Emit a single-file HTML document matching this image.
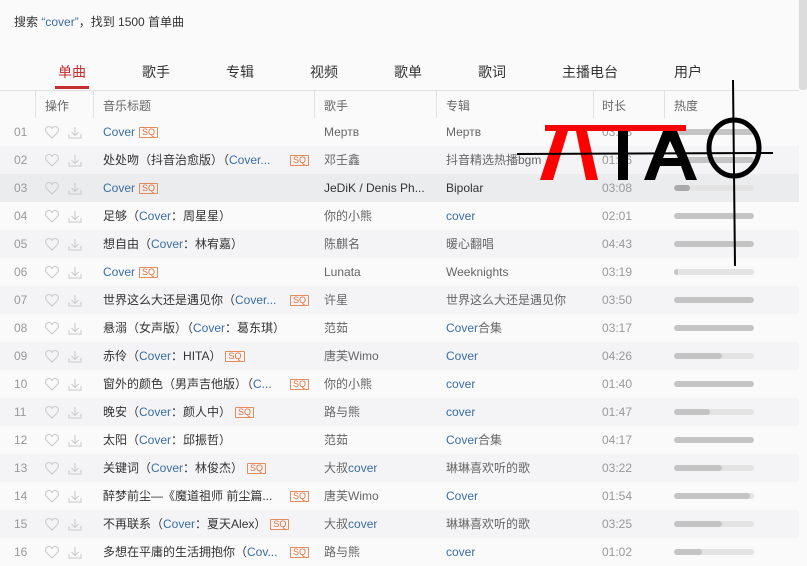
<!DOCTYPE html>
<html><head><meta charset="utf-8"><style>
*{margin:0;padding:0;box-sizing:border-box}
body{width:807px;height:554px;overflow:hidden;background:#fafafa;font-family:"Liberation Sans","Noto Sans CJK SC",sans-serif;font-size:12px;color:#333;position:relative}
.a{position:absolute;white-space:nowrap}
.b,.r .b{color:#3a6ea5}
.hd{position:absolute;left:0;top:90px;width:799px;height:29px;border-top:1px solid #e1e1e2;border-bottom:1px solid #e1e1e2;background:#fafafa;color:#666}
.hd span{position:absolute;top:6px}
.hd i{position:absolute;top:0;width:1px;height:27px;background:#e1e1e2}
.r{position:absolute;left:0;width:799px;height:28px;line-height:28px}
.r span{position:absolute;white-space:nowrap}
.n{left:14px;color:#999}
.t{left:103px}
.s{left:324px;color:#666}
.al{left:446px;color:#666}
.d{left:602px;color:#999}
.sq{display:inline-block;border:1px solid #e58a5a;color:#e0703a;font-size:9px;line-height:9px;height:11px;padding:0 2px;border-radius:1px;vertical-align:1px;margin-left:4px;font-style:normal}
.bar{position:absolute;left:674px;top:11px;width:80px;height:6px;border-radius:3px;background:#e3e3e3;overflow:hidden}
.bar b{display:block;height:6px;background:#c4c4c4;border-radius:3px}
.ic{position:absolute;left:45px;top:7px}
</style></head><body>
<div class="a" style="left:14px;top:13px;color:#333">搜索 <span class="b">“cover”</span>，找到 1500 首单曲</div>
<div class="a" style="top:62px;left:58px;font-size:14px;color:#c62f2f">单曲</div>
<div class="a" style="left:55px;top:86px;width:34px;height:3px;background:#c62f2f"></div>
<div class="a" style="top:62px;left:142px;font-size:14px">歌手</div>
<div class="a" style="top:62px;left:226px;font-size:14px">专辑</div>
<div class="a" style="top:62px;left:310px;font-size:14px">视频</div>
<div class="a" style="top:62px;left:394px;font-size:14px">歌单</div>
<div class="a" style="top:62px;left:478px;font-size:14px">歌词</div>
<div class="a" style="top:62px;left:562px;font-size:14px">主播电台</div>
<div class="a" style="top:62px;left:674px;font-size:14px">用户</div>
<div class="hd"><i style="left:35px"></i><span style="left:45px">操作</span><i style="left:93px"></i><span style="left:103px">音乐标题</span><i style="left:314px"></i><span style="left:324px">歌手</span><i style="left:436px"></i><span style="left:446px">专辑</span><i style="left:593px"></i><span style="left:602px">时长</span><i style="left:664px"></i><span style="left:674px">热度</span></div>
<div class="a" style="left:799px;top:0;width:8px;height:90px;background:#dcdcdc;border-radius:0 0 3px 3px"></div>

<svg width="0" height="0" style="position:absolute"><defs><g id="ic"><path d="M7 13 L1.5 7.5 C-0.5 5 1 1.5 4 1.5 C5.5 1.5 6.5 2.5 7 3.5 C7.5 2.5 8.5 1.5 10 1.5 C13 1.5 14.5 5 12.5 7.5 Z" fill="none" stroke="#c8c8c8" stroke-width="1"/><path d="M30 2 V10 M26.5 7 L30 10.5 L33.5 7 M24 9 V13 H36 V9" fill="none" stroke="#c8c8c8" stroke-width="1"/></g></defs></svg>

<div class="r" style="top:118px;background:#fafafa"><span class="n">01</span><svg class="ic" width="40" height="15"><use href="#ic"/></svg><span class="t b">Cover<i class="sq">SQ</i></span><span class="s">Мертв</span><span class="al">Мертв</span><span class="d">03:33</span><div class="bar"><b style="width:100%"></b></div></div>
<div class="r" style="top:146px;background:#f4f4f6"><span class="n">02</span><svg class="ic" width="40" height="15"><use href="#ic"/></svg><span class="t">处处吻（抖音治愈版）（<span class="b" style="position:static">Cover...</span></span><span style="left:286px"><i class="sq">SQ</i></span><span class="s">邓壬鑫</span><span class="al">抖音精选热播bgm</span><span class="d">01:56</span><div class="bar"><b style="width:100%"></b></div></div>
<div class="r" style="top:174px;background:#ebecee"><span class="n">03</span><svg class="ic" width="40" height="15"><use href="#ic"/></svg><span class="t b">Cover<i class="sq">SQ</i></span><span class="s" style="color:#333">JeDiK / Denis Ph...</span><span class="al" style="color:#333">Bipolar</span><span class="d">03:08</span><div class="bar"><b style="width:20%;background:#aaa"></b></div></div>
<div class="r" style="top:202px;background:#fafafa"><span class="n">04</span><svg class="ic" width="40" height="15"><use href="#ic"/></svg><span class="t">足够（<span class="b" style="position:static">Cover</span>：周星星）</span><span class="s">你的小熊</span><span class="al b">cover</span><span class="d">02:01</span><div class="bar"><b style="width:100%"></b></div></div>
<div class="r" style="top:230px;background:#f4f4f6"><span class="n">05</span><svg class="ic" width="40" height="15"><use href="#ic"/></svg><span class="t">想自由（<span class="b" style="position:static">Cover</span>：林宥嘉）</span><span class="s">陈麒名</span><span class="al">暖心翻唱</span><span class="d">04:43</span><div class="bar"><b style="width:100%"></b></div></div>
<div class="r" style="top:258px;background:#fafafa"><span class="n">06</span><svg class="ic" width="40" height="15"><use href="#ic"/></svg><span class="t b">Cover<i class="sq">SQ</i></span><span class="s">Lunata</span><span class="al">Weeknights</span><span class="d">03:19</span><div class="bar"><b style="width:5%"></b></div></div>
<div class="r" style="top:286px;background:#f4f4f6"><span class="n">07</span><svg class="ic" width="40" height="15"><use href="#ic"/></svg><span class="t">世界这么大还是遇见你（<span class="b" style="position:static">Cover...</span></span><span style="left:286px"><i class="sq">SQ</i></span><span class="s">许星</span><span class="al">世界这么大还是遇见你</span><span class="d">03:50</span><div class="bar"><b style="width:100%"></b></div></div>
<div class="r" style="top:314px;background:#fafafa"><span class="n">08</span><svg class="ic" width="40" height="15"><use href="#ic"/></svg><span class="t">悬溺（女声版）（<span class="b" style="position:static">Cover</span>：葛东琪）</span><span class="s">范茹</span><span class="al"><span class="b" style="position:static">Cover</span>合集</span><span class="d">03:17</span><div class="bar"><b style="width:100%"></b></div></div>
<div class="r" style="top:342px;background:#f4f4f6"><span class="n">09</span><svg class="ic" width="40" height="15"><use href="#ic"/></svg><span class="t">赤伶（<span class="b" style="position:static">Cover</span>：HITA）<i class="sq">SQ</i></span><span class="s">唐芙Wimo</span><span class="al b">Cover</span><span class="d">04:26</span><div class="bar"><b style="width:60%"></b></div></div>
<div class="r" style="top:370px;background:#fafafa"><span class="n">10</span><svg class="ic" width="40" height="15"><use href="#ic"/></svg><span class="t">窗外的颜色（男声吉他版）（<span class="b" style="position:static">C...</span></span><span style="left:286px"><i class="sq">SQ</i></span><span class="s">你的小熊</span><span class="al b">cover</span><span class="d">01:40</span><div class="bar"><b style="width:100%"></b></div></div>
<div class="r" style="top:398px;background:#f4f4f6"><span class="n">11</span><svg class="ic" width="40" height="15"><use href="#ic"/></svg><span class="t">晚安（<span class="b" style="position:static">Cover</span>：颜人中）<i class="sq">SQ</i></span><span class="s">路与熊</span><span class="al b">cover</span><span class="d">01:47</span><div class="bar"><b style="width:45%"></b></div></div>
<div class="r" style="top:426px;background:#fafafa"><span class="n">12</span><svg class="ic" width="40" height="15"><use href="#ic"/></svg><span class="t">太阳（<span class="b" style="position:static">Cover</span>：邱振哲）</span><span class="s">范茹</span><span class="al"><span class="b" style="position:static">Cover</span>合集</span><span class="d">04:17</span><div class="bar"><b style="width:100%"></b></div></div>
<div class="r" style="top:454px;background:#f4f4f6"><span class="n">13</span><svg class="ic" width="40" height="15"><use href="#ic"/></svg><span class="t">关键词（<span class="b" style="position:static">Cover</span>：林俊杰）<i class="sq">SQ</i></span><span class="s">大叔<span class="b" style="position:static">cover</span></span><span class="al">琳琳喜欢听的歌</span><span class="d">03:22</span><div class="bar"><b style="width:60%"></b></div></div>
<div class="r" style="top:482px;background:#fafafa"><span class="n">14</span><svg class="ic" width="40" height="15"><use href="#ic"/></svg><span class="t">醉梦前尘—《魔道祖师 前尘篇...</span><span style="left:286px"><i class="sq">SQ</i></span><span class="s">唐芙Wimo</span><span class="al b">Cover</span><span class="d">01:54</span><div class="bar"><b style="width:95%"></b></div></div>
<div class="r" style="top:510px;background:#f4f4f6"><span class="n">15</span><svg class="ic" width="40" height="15"><use href="#ic"/></svg><span class="t">不再联系（<span class="b" style="position:static">Cover</span>：夏天Alex）<i class="sq">SQ</i></span><span class="s">大叔<span class="b" style="position:static">cover</span></span><span class="al">琳琳喜欢听的歌</span><span class="d">03:25</span><div class="bar"><b style="width:60%"></b></div></div>
<div class="r" style="top:538px;background:#fafafa"><span class="n">16</span><svg class="ic" width="40" height="15"><use href="#ic"/></svg><span class="t">多想在平庸的生活拥抱你（<span class="b" style="position:static">Cov...</span></span><span style="left:286px"><i class="sq">SQ</i></span><span class="s">路与熊</span><span class="al b">cover</span><span class="d">01:02</span><div class="bar"><b style="width:35%"></b></div></div>

<svg class="a" style="left:0;top:0" width="807" height="554">
<rect x="545" y="125" width="141" height="6" fill="#f00"/>
<path d="M556 131 H568 L553 180 H540 Z" fill="#f00"/>
<path d="M576 131 H587 L598 180 H586 Z" fill="#f00"/>
<rect x="618" y="131" width="10" height="49" fill="#000"/>
<path d="M663 131 H677 L697 180 H686 L681 166 H660 L655 180 H644 Z M670 141 L663 158 H678 Z" fill="#000" fill-rule="evenodd"/>
<ellipse cx="734" cy="148" rx="25" ry="28" fill="none" stroke="#000" stroke-width="5"/>
<line x1="733" y1="80" x2="735" y2="266" stroke="#000" stroke-width="2"/>
<line x1="517" y1="154" x2="773" y2="153" stroke="#000" stroke-width="2"/>
</svg>
</body></html>
